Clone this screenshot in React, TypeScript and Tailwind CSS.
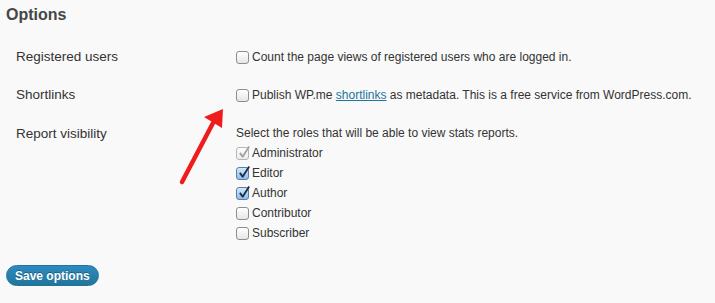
const Box = ({ state }: { state: "off" | "on" | "disabled" }) => {
    if (state === "off") {
        return (
            <span className="inline-block w-[13px] h-[13px] rounded-[3px] border border-[#8e8e8e] bg-gradient-to-b from-white to-[#e6e6e6] shadow-[inset_0_1px_0_#fff] shrink-0"></span>
        )
    }
    const blue = state === "on"
    return (
        <span
            className={
                blue
                    ? "relative inline-block w-[13px] h-[13px] rounded-[3px] border border-[#5a7fa6] bg-gradient-to-b from-[#d4e8fb] to-[#8fbdeb] shrink-0"
                    : "relative inline-block w-[13px] h-[13px] rounded-[3px] border border-[#b5b5b5] bg-gradient-to-b from-white to-[#ececec] shrink-0"
            }
        >
            <svg viewBox="0 0 14 14" className="absolute left-[1px] top-[-3px] w-[13px] h-[14px]">
                <path d="M2 8 L5 12 L12 1" fill="none" stroke={blue ? "#1d2f4a" : "#a3a3a3"} strokeWidth="2" strokeLinejoin="round" />
            </svg>
        </span>
    )
}

const Check = ({ state, children }: { state: "off" | "on" | "disabled"; children: React.ReactNode }) => (
    <label className="flex items-center gap-[3px] h-[20px] whitespace-nowrap">
        <Box state={state} />
        <span>{children}</span>
    </label>
)

export default function App() {
    return (
        <div className="relative w-[715px] h-[303px] bg-[#f9f9f9] text-[#333] overflow-hidden" style={{ fontFamily: '"Liberation Sans", Arial, sans-serif' }}>
            <div className="px-[6px] pt-[4px]">
                <h2 className="text-[16px] font-bold leading-[22px] text-[#464646]">Options</h2>

                <div className="mt-[12px] text-[12px]">
                    <div className="flex h-[38px] items-center">
                        <div className="w-[230px] pl-[10px] text-[13.5px]">Registered users</div>
                        <Check state="off">Count the page views of registered users who are logged in.</Check>
                    </div>
                    <div className="flex h-[38px] items-center">
                        <div className="w-[230px] pl-[10px] text-[13.5px]">Shortlinks</div>
                        <Check state="off">
                            Publish WP.me <a className="text-[#21759b] underline">shortlinks</a> as metadata. This is a free service from WordPress.com.
                        </Check>
                    </div>
                    <div className="flex pt-[9px]">
                        <div className="w-[230px] pl-[10px] text-[13.5px] leading-[20px] pt-[1px]">Report visibility</div>
                        <div>
                            <p className="leading-[20px]">Select the roles that will be able to view stats reports.</p>
                            <Check state="disabled">Administrator</Check>
                            <Check state="on">Editor</Check>
                            <Check state="on">Author</Check>
                            <Check state="off">Contributor</Check>
                            <Check state="off">Subscriber</Check>
                        </div>
                    </div>
                </div>

                <button className="mt-[22px] h-[21px] px-[8px] rounded-full border border-[#21759b] bg-gradient-to-b from-[#2e8bc0] to-[#21759b] text-white text-[12px] font-bold [text-shadow:0_-1px_0_rgba(0,0,0,0.3)]">
                    Save options
                </button>
            </div>

            <svg className="absolute left-0 top-0 pointer-events-none" width="715" height="303">
                <line x1="182" y1="182" x2="213" y2="123" stroke="#ee1c1c" strokeWidth="4.5" strokeLinecap="round" />
                <polygon points="223,109 204,117 222,128" fill="#ee1c1c" />
            </svg>
        </div>
    )
}
